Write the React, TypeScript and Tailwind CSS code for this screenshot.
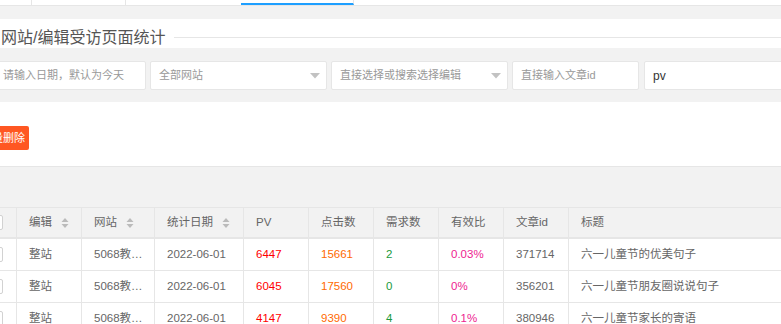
import React from "react";

const FONT = { fontFamily: '"Liberation Sans", "Noto Sans CJK SC", sans-serif' };

type Col = { key: string; label: string; width: string; sort?: boolean };

const columns: Col[] = [
  { key: "editor", label: "编辑", width: "w-[65px]", sort: true },
  { key: "site", label: "网站", width: "w-[73px]", sort: true },
  { key: "date", label: "统计日期", width: "w-[89px]", sort: true },
  { key: "pv", label: "PV", width: "w-[65px]" },
  { key: "clicks", label: "点击数", width: "w-[65px]" },
  { key: "needs", label: "需求数", width: "w-[65px]" },
  { key: "ratio", label: "有效比", width: "w-[65px]" },
  { key: "id", label: "文章id", width: "w-[65px]" },
  { key: "title", label: "标题", width: "w-[260px]" },
];

const rows = [
  { editor: "整站", site: "5068教…", date: "2022-06-01", pv: "6447", clicks: "15661", needs: "2", ratio: "0.03%", id: "371714", title: "六一儿童节的优美句子" },
  { editor: "整站", site: "5068教…", date: "2022-06-01", pv: "6045", clicks: "17560", needs: "0", ratio: "0%", id: "356201", title: "六一儿童节朋友圈说说句子" },
  { editor: "整站", site: "5068教…", date: "2022-06-01", pv: "4147", clicks: "9390", needs: "4", ratio: "0.1%", id: "380946", title: "六一儿童节家长的寄语" },
];

const colors: Record<string, string> = {
  pv: "text-[#ff0000]",
  clicks: "text-[#ff6a00]",
  needs: "text-[#1a9a3c]",
  ratio: "text-[#ee1d8f]",
};

function SortIcon() {
  return (
    <svg width="8" height="12" viewBox="0 0 8 12" className="ml-[9px] shrink-0">
      <path d="M4 1 L7.5 5 L0.5 5 Z" fill="#bbb" />
      <path d="M4 11 L7.5 7 L0.5 7 Z" fill="#bbb" />
    </svg>
  );
}

function Caret() {
  return (
    <svg width="10" height="6" viewBox="0 0 10 6" className="shrink-0">
      <path d="M0 0 L10 0 L5 5.5 Z" fill="#c2c2c2" />
    </svg>
  );
}

function Checkbox() {
  return <div className="w-[15px] h-[15px] border border-[#d2d2d2] rounded-[2px] bg-white -ml-[12px] shrink-0" />;
}

export default function App() {
  return (
    <div className="w-[781px] h-[324px] overflow-hidden bg-[#f2f2f2] text-[11.5px] text-[#666]" style={FONT}>
      {/* tab bar */}
      <div className="h-[6px] bg-white border-b border-[#e6e6e6] flex">
        <div className="w-[32px] border-r border-[#e6e6e6]" />
        <div className="w-[94px] border-r border-[#e6e6e6]" />
        <div className="w-[115px]" />
        <div className="w-[113px] border-b-[2px] border-[#1e9fff] border-r border-r-[#e6e6e6]" />
      </div>

      <div className="h-[13px]" />

      {/* fieldset legend */}
      <div className="h-[29px] bg-white pt-[8px]">
        <div className="flex items-center h-[20px]">
          <span className="text-[16px] text-[#555] pl-[1px] pr-[9px] leading-[20px] pt-[2px] whitespace-nowrap">
            网站/编辑受访页面统计
          </span>
          <div className="flex-1 h-px bg-[#e6e6e6]" />
        </div>
      </div>

      {/* search form */}
      <div className="h-[54px] pt-[13px] flex gap-[4px] text-[11px]">
        <div className="-ml-[7px] w-[153px] shrink-0 h-[29px] bg-white border border-[#e6e6e6] rounded-[2px] flex items-center pl-[9px] text-[#999] whitespace-nowrap">
          请输入日期，默认为今天
        </div>
        <div className="w-[177px] shrink-0 h-[29px] bg-white border border-[#e6e6e6] rounded-[2px] flex items-center justify-between pl-[8px] pr-[6px] text-[#999]">
          <span>全部网站</span>
          <Caret />
        </div>
        <div className="w-[177px] shrink-0 h-[29px] bg-white border border-[#e6e6e6] rounded-[2px] flex items-center justify-between pl-[8px] pr-[6px] text-[#999] whitespace-nowrap">
          <span>直接选择或搜索选择编辑</span>
          <Caret />
        </div>
        <div className="w-[127px] shrink-0 h-[29px] bg-white border border-[#e6e6e6] rounded-[2px] flex items-center pl-[8px] text-[#999]">
          直接输入文章id
        </div>
        <div className="ml-[1px] w-[200px] shrink-0 h-[29px] bg-white border border-[#e6e6e6] rounded-[2px] flex items-center pl-[8px] text-[#333] text-[12px]">
          pv
        </div>
      </div>

      {/* action bar */}
      <div className="h-[65px] bg-white border-b border-[#e6e6e6] pt-[24px]">
        <button className="-ml-[23px] h-[24px] px-[4px] bg-[#ff5722] text-white text-[11px] rounded-[2px] leading-[24px]">
          批量删除
        </button>
      </div>

      {/* toolbar */}
      <div className="h-[40px] bg-[#f2f2f2]" />

      {/* table */}
      <div className="bg-white border-t border-[#e6e6e6]">
        <div className="flex h-[31px] bg-[#f2f2f2] border-b-[2px] border-[#e6e6e6]">
          <div className="w-[17px] border-r border-[#e6e6e6] flex items-center shrink-0">
            <Checkbox />
          </div>
          {columns.map((c) => (
            <div key={c.key} className={`${c.width} shrink-0 border-r border-[#e6e6e6] flex items-center pl-[12px] text-[#666]`}>
              <span>{c.label}</span>
              {c.sort && <SortIcon />}
            </div>
          ))}
        </div>
        {rows.map((r, i) => (
          <div key={i} className="flex h-[32px] border-b border-[#e6e6e6]">
            <div className="w-[17px] border-r border-[#e6e6e6] flex items-center shrink-0">
              <Checkbox />
            </div>
            {columns.map((c) => (
              <div
                key={c.key}
                className={`${c.width} shrink-0 border-r border-[#e6e6e6] flex items-center pl-[12px] whitespace-nowrap ${colors[c.key] ?? "text-[#666]"}`}
              >
                {(r as Record<string, string>)[c.key]}
              </div>
            ))}
          </div>
        ))}
      </div>
    </div>
  );
}
